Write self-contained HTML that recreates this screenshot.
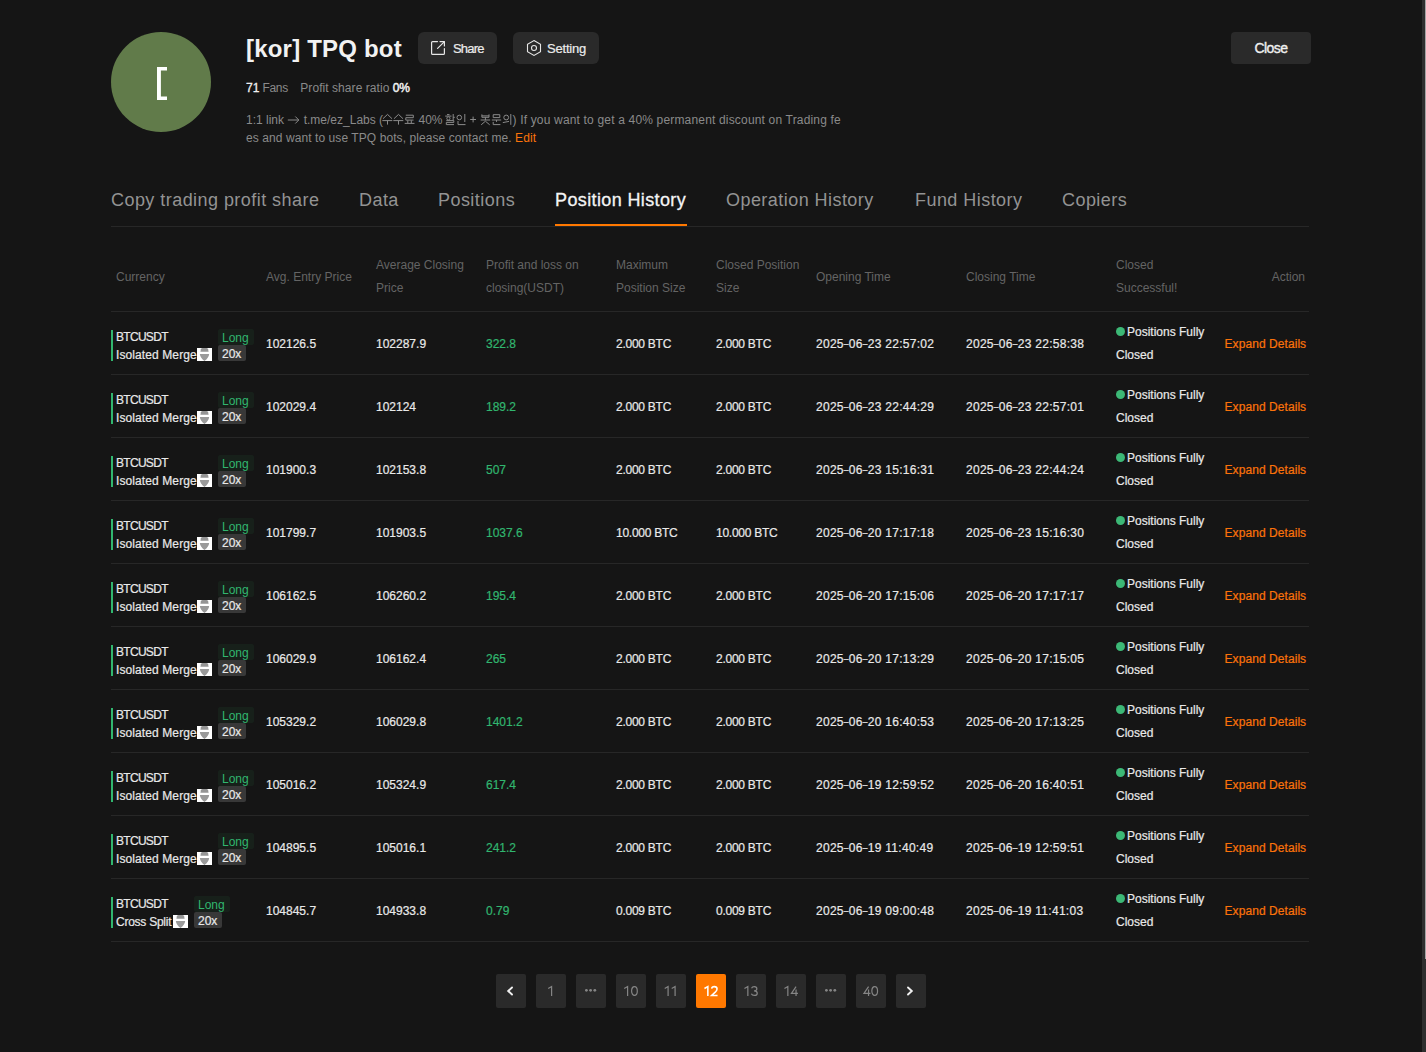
<!DOCTYPE html>
<html><head><meta charset="utf-8"><title>Position History</title><style>
*{margin:0;padding:0;box-sizing:border-box}
html,body{width:1426px;height:1052px;overflow:hidden;background:#151515}
body{position:relative;font-family:"Liberation Sans",sans-serif;color:#e9e9e9;font-size:12px}
.a{position:absolute;white-space:nowrap}
.t12{font-size:12px;line-height:14px}
.m{-webkit-text-stroke:0.2px currentColor}
.hdr{color:#646464}
.line{position:absolute;height:1px;background:#272727;left:111px;width:1198px}
.btn{position:absolute;background:#2a2a2a;border-radius:6px;height:32px;top:32px}
.tab{position:absolute;top:189px;font-size:18px;line-height:22px;color:#939393;letter-spacing:0.45px;white-space:nowrap}
.pg{position:absolute;top:974px;width:30px;height:34px;background:#2a2a2a;border-radius:2px;color:#7d7d7d;font-size:14px;line-height:34px;text-align:center}
.bar{position:absolute;left:111px;width:2px;height:31px;background:#31b66f}
.long{position:absolute;width:36px;height:16px;background:#17201a;border-radius:2px;color:#31b66f;font-size:12px;line-height:18px;padding-left:4px}
.lev{position:absolute;width:28px;height:16px;background:#383838;border-radius:2px;color:#e9e9e9;font-size:12px;line-height:18px;padding-left:4px;-webkit-text-stroke:0.2px currentColor}
.ico{position:absolute;width:15px;height:13px;background:#fff}
.dot{position:absolute;width:9px;height:9px;border-radius:50%;background:#3cb876}
.exp{color:#fb730a}
</style></head><body>
<div class="a" style="left:1422px;top:0;width:4px;height:1052px;background:#2e2e2e"></div>
<div class="a" style="left:1425px;top:0;width:1px;height:959px;background:#a4a4a4"></div>
<div class="a" style="left:111px;top:32px;width:100px;height:100px;border-radius:50%;background:#617b4a"></div>
<svg class="a" style="left:157px;top:67px" width="10" height="34"><path d="M0 0 H10 V3.4 H3.9 V29.6 H10 V33 H0 Z" fill="#fff"/></svg>
<div class="a" style="left:246px;top:35px;font-size:24px;line-height:28px;font-weight:700;color:#f2f2f2;letter-spacing:0.2px">[kor] TPQ bot</div>
<div class="btn" style="left:418px;width:79px"></div>
<svg class="a" style="left:430px;top:40px" width="16" height="16" viewBox="0 0 16 16" fill="none" stroke="#e6e6e6" stroke-width="1.2" stroke-linecap="round" stroke-linejoin="round"><path d="M7.5 1.6 H2.6 Q1.6 1.6 1.6 2.6 V13.4 Q1.6 14.4 2.6 14.4 H13.4 Q14.4 14.4 14.4 13.4 V8.5"/><path d="M10 1.6 H14.4 V6"/><path d="M14.2 1.8 L7.6 8.4"/></svg>
<div class="a m" style="left:453px;top:41px;font-size:13px;line-height:15px;color:#ececec;letter-spacing:-0.8px">Share</div>
<div class="btn" style="left:513px;width:86px"></div>
<svg class="a" style="left:526px;top:40px" width="16" height="16" viewBox="0 0 16 16" fill="none" stroke="#e6e6e6" stroke-width="1.1"><path d="M8 0.6 L14.5 4.3 V11.7 L8 15.4 L1.5 11.7 V4.3 Z"/><circle cx="8" cy="8" r="2.5"/></svg>
<div class="a m" style="left:547px;top:41px;font-size:13px;line-height:15px;color:#ececec;letter-spacing:-0.2px">Setting</div>
<div class="btn" style="left:1231px;width:80px;border-radius:4px"></div>
<div class="a" style="left:1231px;width:80px;text-align:center;top:40px;font-size:14px;line-height:16px;-webkit-text-stroke:0.35px #f0f0f0;color:#f0f0f0;letter-spacing:-0.6px">Close</div>
<div class="a t12" style="left:246px;top:81px;color:#8a8a8a"><span style="color:#f0f0f0;-webkit-text-stroke:0.3px #f0f0f0">71</span><span style="letter-spacing:-0.3px"> Fans</span></div>
<div class="a t12" style="left:300.3px;top:81px;color:#8a8a8a;letter-spacing:0.06px">Profit share ratio <span style="color:#f4f4f4;-webkit-text-stroke:0.45px #f4f4f4;letter-spacing:-0.2px">0%</span></div>
<div class="a" style="left:246px;top:111px;font-size:12px;line-height:18px;color:#8a8a8a">1:1 link <svg width="13" height="10" viewBox="0 0 13 10" style="vertical-align:-0.5px" fill="none" stroke="#8a8a8a" stroke-width="1"><path d="M0.8 5 H11.8 M8.3 1.5 L11.8 5 L8.3 8.5"/></svg> t.me/ez_Labs (</div>
<div class="a" style="left:418.5px;top:111px;font-size:12px;line-height:18px;color:#8a8a8a">40%</div>
<svg class="a" style="left:380px;top:112px" width="136" height="16" viewBox="0 0 136 16" fill="none" stroke="#8a8a8a" stroke-width="1"><path d="M3 6.7 L7.5 2.4 L12 6.7 M2.3 8.6 H12.3 M7.5 8.6 V12.6 M14 6.7 L18.5 2.4 L23 6.7 M13.3 8.6 H23.3 M18.5 8.6 V12.6 M25.8 3.2 H33.3 V5.7 H25.8 V8.1 H33.5 M27.8 8.3 V11.2 M31.3 8.3 V11.2 M24.7 11.4 H34.5 M67 2.6 H69.5 M65.2 4.1 H71.5 M73.2 2 V8.3 M73.2 5.3 H74.8 M66.3 8.6 H73.8 V10.4 H66.3 V12.6 H74 M84.8 2 V10 M78 9 V12.6 H85.5 M90.2 7.5 H96 M93.1 4.6 V10.4 M101.9 2.4 V5.3 H109 V2.4 M101.9 3.9 H109 M100.6 8 H110.2 M105.4 5.3 V8 M101.2 12.8 L105.4 9.2 L109.7 12.8 M113.2 2.7 H119.8 V5.6 H113.2 Z M111.8 8 H121.2 M116.5 8 V9.9 M113.2 9.9 V12.6 H120.4 M122.8 10.6 L129 9.4 M130.8 2 V12.8"/><circle cx="68.4" cy="6.4" r="1.6"/><circle cx="79.3" cy="5.5" r="2.3"/><circle cx="126.2" cy="5.5" r="2.4"/></svg>
<div class="a" style="left:512.5px;top:111px;font-size:12px;line-height:18px;color:#8a8a8a;letter-spacing:0.173px">) If you want to get a 40% permanent discount on Trading fe</div>
<div class="a" style="left:246px;top:129px;font-size:12px;line-height:18px;color:#8a8a8a;letter-spacing:0.08px">es and want to use TPQ bots, please contact me. <span style="color:#fb730a">Edit</span></div>
<div class="tab" style="left:111px">Copy trading profit share</div>
<div class="tab" style="left:359px">Data</div>
<div class="tab" style="left:438px">Positions</div>
<div class="tab" style="left:555px;color:#f4f4f4;letter-spacing:0.38px;-webkit-text-stroke:0.3px #f4f4f4">Position History</div>
<div class="tab" style="left:726px">Operation History</div>
<div class="tab" style="left:915px">Fund History</div>
<div class="tab" style="left:1062px">Copiers</div>
<div class="line" style="top:226px"></div>
<div class="a" style="left:555px;top:224px;width:132px;height:2px;background:#ff7800"></div>
<div class="a t12 hdr" style="left:116px;top:270px">Currency</div>
<div class="a t12 hdr" style="left:266px;top:270px">Avg. Entry Price</div>
<div class="a hdr" style="left:376px;top:254px;font-size:12px;line-height:23px">Average Closing<br>Price</div>
<div class="a hdr" style="left:486px;top:254px;font-size:12px;line-height:23px">Profit and loss on<br>closing(USDT)</div>
<div class="a hdr" style="left:616px;top:254px;font-size:12px;line-height:23px">Maximum<br>Position Size</div>
<div class="a hdr" style="left:716px;top:254px;font-size:12px;line-height:23px">Closed Position<br>Size</div>
<div class="a t12 hdr" style="left:816px;top:270px">Opening Time</div>
<div class="a t12 hdr" style="left:966px;top:270px">Closing Time</div>
<div class="a hdr" style="left:1116px;top:254px;font-size:12px;line-height:23px">Closed<br>Successful!</div>
<div class="a t12 hdr" style="left:1205px;width:100px;text-align:right;top:270px">Action</div>
<div class="line" style="top:311px"></div>
<div class="line" style="top:374px"></div>
<div class="bar" style="top:330px"></div>
<div class="a t12 m" style="left:116px;top:330px;letter-spacing:-0.7px">BTCUSDT</div>
<div class="a t12 m" style="left:116px;top:348px;letter-spacing:0.1px">Isolated Merge</div>
<svg class="ico" style="left:197px;top:348px" width="15" height="13" viewBox="0 0 15 13"><rect width="15" height="13" fill="#fff"/><path d="M3.4 3.8 L3.9 1.2 Q4.2 0 5.6 0 H9.4 Q10.8 0 11.1 1.2 L11.6 3.8 Z" fill="#959595"/><path d="M2.8 6 H12.2 Q11.6 10 7.5 13 Q3.4 10 2.8 6 Z" fill="#9a9a9a"/></svg>
<div class="long" style="left:218px;top:329px">Long</div>
<div class="lev" style="left:218px;top:345px">20x</div>
<div class="a t12 m" style="left:266px;top:337px">102126.5</div>
<div class="a t12 m" style="left:376px;top:337px">102287.9</div>
<div class="a t12 m" style="left:486px;top:337px;color:#31b66f">322.8</div>
<div class="a t12 m" style="left:616px;top:337px;letter-spacing:-0.25px">2.000 BTC</div>
<div class="a t12 m" style="left:716px;top:337px;letter-spacing:-0.25px">2.000 BTC</div>
<div class="a t12 m" style="left:816px;top:337px;letter-spacing:0.28px">2025<span style="font-size:8.5px;vertical-align:1px">–</span>06<span style="font-size:8.5px;vertical-align:1px">–</span>23 22:57:02</div>
<div class="a t12 m" style="left:966px;top:337px;letter-spacing:0.28px">2025<span style="font-size:8.5px;vertical-align:1px">–</span>06<span style="font-size:8.5px;vertical-align:1px">–</span>23 22:58:38</div>
<div class="dot" style="left:1116px;top:327px"></div>
<div class="a t12 m" style="left:1127px;top:325px">Positions Fully</div>
<div class="a t12 m" style="left:1116px;top:348px">Closed</div>
<div class="a t12 m exp" style="left:1224.5px;top:337px;letter-spacing:0.07px">Expand Details</div>
<div class="line" style="top:437px"></div>
<div class="bar" style="top:393px"></div>
<div class="a t12 m" style="left:116px;top:393px;letter-spacing:-0.7px">BTCUSDT</div>
<div class="a t12 m" style="left:116px;top:411px;letter-spacing:0.1px">Isolated Merge</div>
<svg class="ico" style="left:197px;top:411px" width="15" height="13" viewBox="0 0 15 13"><rect width="15" height="13" fill="#fff"/><path d="M3.4 3.8 L3.9 1.2 Q4.2 0 5.6 0 H9.4 Q10.8 0 11.1 1.2 L11.6 3.8 Z" fill="#959595"/><path d="M2.8 6 H12.2 Q11.6 10 7.5 13 Q3.4 10 2.8 6 Z" fill="#9a9a9a"/></svg>
<div class="long" style="left:218px;top:392px">Long</div>
<div class="lev" style="left:218px;top:408px">20x</div>
<div class="a t12 m" style="left:266px;top:400px">102029.4</div>
<div class="a t12 m" style="left:376px;top:400px">102124</div>
<div class="a t12 m" style="left:486px;top:400px;color:#31b66f">189.2</div>
<div class="a t12 m" style="left:616px;top:400px;letter-spacing:-0.25px">2.000 BTC</div>
<div class="a t12 m" style="left:716px;top:400px;letter-spacing:-0.25px">2.000 BTC</div>
<div class="a t12 m" style="left:816px;top:400px;letter-spacing:0.28px">2025<span style="font-size:8.5px;vertical-align:1px">–</span>06<span style="font-size:8.5px;vertical-align:1px">–</span>23 22:44:29</div>
<div class="a t12 m" style="left:966px;top:400px;letter-spacing:0.28px">2025<span style="font-size:8.5px;vertical-align:1px">–</span>06<span style="font-size:8.5px;vertical-align:1px">–</span>23 22:57:01</div>
<div class="dot" style="left:1116px;top:390px"></div>
<div class="a t12 m" style="left:1127px;top:388px">Positions Fully</div>
<div class="a t12 m" style="left:1116px;top:411px">Closed</div>
<div class="a t12 m exp" style="left:1224.5px;top:400px;letter-spacing:0.07px">Expand Details</div>
<div class="line" style="top:500px"></div>
<div class="bar" style="top:456px"></div>
<div class="a t12 m" style="left:116px;top:456px;letter-spacing:-0.7px">BTCUSDT</div>
<div class="a t12 m" style="left:116px;top:474px;letter-spacing:0.1px">Isolated Merge</div>
<svg class="ico" style="left:197px;top:474px" width="15" height="13" viewBox="0 0 15 13"><rect width="15" height="13" fill="#fff"/><path d="M3.4 3.8 L3.9 1.2 Q4.2 0 5.6 0 H9.4 Q10.8 0 11.1 1.2 L11.6 3.8 Z" fill="#959595"/><path d="M2.8 6 H12.2 Q11.6 10 7.5 13 Q3.4 10 2.8 6 Z" fill="#9a9a9a"/></svg>
<div class="long" style="left:218px;top:455px">Long</div>
<div class="lev" style="left:218px;top:471px">20x</div>
<div class="a t12 m" style="left:266px;top:463px">101900.3</div>
<div class="a t12 m" style="left:376px;top:463px">102153.8</div>
<div class="a t12 m" style="left:486px;top:463px;color:#31b66f">507</div>
<div class="a t12 m" style="left:616px;top:463px;letter-spacing:-0.25px">2.000 BTC</div>
<div class="a t12 m" style="left:716px;top:463px;letter-spacing:-0.25px">2.000 BTC</div>
<div class="a t12 m" style="left:816px;top:463px;letter-spacing:0.28px">2025<span style="font-size:8.5px;vertical-align:1px">–</span>06<span style="font-size:8.5px;vertical-align:1px">–</span>23 15:16:31</div>
<div class="a t12 m" style="left:966px;top:463px;letter-spacing:0.28px">2025<span style="font-size:8.5px;vertical-align:1px">–</span>06<span style="font-size:8.5px;vertical-align:1px">–</span>23 22:44:24</div>
<div class="dot" style="left:1116px;top:453px"></div>
<div class="a t12 m" style="left:1127px;top:451px">Positions Fully</div>
<div class="a t12 m" style="left:1116px;top:474px">Closed</div>
<div class="a t12 m exp" style="left:1224.5px;top:463px;letter-spacing:0.07px">Expand Details</div>
<div class="line" style="top:563px"></div>
<div class="bar" style="top:519px"></div>
<div class="a t12 m" style="left:116px;top:519px;letter-spacing:-0.7px">BTCUSDT</div>
<div class="a t12 m" style="left:116px;top:537px;letter-spacing:0.1px">Isolated Merge</div>
<svg class="ico" style="left:197px;top:537px" width="15" height="13" viewBox="0 0 15 13"><rect width="15" height="13" fill="#fff"/><path d="M3.4 3.8 L3.9 1.2 Q4.2 0 5.6 0 H9.4 Q10.8 0 11.1 1.2 L11.6 3.8 Z" fill="#959595"/><path d="M2.8 6 H12.2 Q11.6 10 7.5 13 Q3.4 10 2.8 6 Z" fill="#9a9a9a"/></svg>
<div class="long" style="left:218px;top:518px">Long</div>
<div class="lev" style="left:218px;top:534px">20x</div>
<div class="a t12 m" style="left:266px;top:526px">101799.7</div>
<div class="a t12 m" style="left:376px;top:526px">101903.5</div>
<div class="a t12 m" style="left:486px;top:526px;color:#31b66f">1037.6</div>
<div class="a t12 m" style="left:616px;top:526px;letter-spacing:-0.25px">10.000 BTC</div>
<div class="a t12 m" style="left:716px;top:526px;letter-spacing:-0.25px">10.000 BTC</div>
<div class="a t12 m" style="left:816px;top:526px;letter-spacing:0.28px">2025<span style="font-size:8.5px;vertical-align:1px">–</span>06<span style="font-size:8.5px;vertical-align:1px">–</span>20 17:17:18</div>
<div class="a t12 m" style="left:966px;top:526px;letter-spacing:0.28px">2025<span style="font-size:8.5px;vertical-align:1px">–</span>06<span style="font-size:8.5px;vertical-align:1px">–</span>23 15:16:30</div>
<div class="dot" style="left:1116px;top:516px"></div>
<div class="a t12 m" style="left:1127px;top:514px">Positions Fully</div>
<div class="a t12 m" style="left:1116px;top:537px">Closed</div>
<div class="a t12 m exp" style="left:1224.5px;top:526px;letter-spacing:0.07px">Expand Details</div>
<div class="line" style="top:626px"></div>
<div class="bar" style="top:582px"></div>
<div class="a t12 m" style="left:116px;top:582px;letter-spacing:-0.7px">BTCUSDT</div>
<div class="a t12 m" style="left:116px;top:600px;letter-spacing:0.1px">Isolated Merge</div>
<svg class="ico" style="left:197px;top:600px" width="15" height="13" viewBox="0 0 15 13"><rect width="15" height="13" fill="#fff"/><path d="M3.4 3.8 L3.9 1.2 Q4.2 0 5.6 0 H9.4 Q10.8 0 11.1 1.2 L11.6 3.8 Z" fill="#959595"/><path d="M2.8 6 H12.2 Q11.6 10 7.5 13 Q3.4 10 2.8 6 Z" fill="#9a9a9a"/></svg>
<div class="long" style="left:218px;top:581px">Long</div>
<div class="lev" style="left:218px;top:597px">20x</div>
<div class="a t12 m" style="left:266px;top:589px">106162.5</div>
<div class="a t12 m" style="left:376px;top:589px">106260.2</div>
<div class="a t12 m" style="left:486px;top:589px;color:#31b66f">195.4</div>
<div class="a t12 m" style="left:616px;top:589px;letter-spacing:-0.25px">2.000 BTC</div>
<div class="a t12 m" style="left:716px;top:589px;letter-spacing:-0.25px">2.000 BTC</div>
<div class="a t12 m" style="left:816px;top:589px;letter-spacing:0.28px">2025<span style="font-size:8.5px;vertical-align:1px">–</span>06<span style="font-size:8.5px;vertical-align:1px">–</span>20 17:15:06</div>
<div class="a t12 m" style="left:966px;top:589px;letter-spacing:0.28px">2025<span style="font-size:8.5px;vertical-align:1px">–</span>06<span style="font-size:8.5px;vertical-align:1px">–</span>20 17:17:17</div>
<div class="dot" style="left:1116px;top:579px"></div>
<div class="a t12 m" style="left:1127px;top:577px">Positions Fully</div>
<div class="a t12 m" style="left:1116px;top:600px">Closed</div>
<div class="a t12 m exp" style="left:1224.5px;top:589px;letter-spacing:0.07px">Expand Details</div>
<div class="line" style="top:689px"></div>
<div class="bar" style="top:645px"></div>
<div class="a t12 m" style="left:116px;top:645px;letter-spacing:-0.7px">BTCUSDT</div>
<div class="a t12 m" style="left:116px;top:663px;letter-spacing:0.1px">Isolated Merge</div>
<svg class="ico" style="left:197px;top:663px" width="15" height="13" viewBox="0 0 15 13"><rect width="15" height="13" fill="#fff"/><path d="M3.4 3.8 L3.9 1.2 Q4.2 0 5.6 0 H9.4 Q10.8 0 11.1 1.2 L11.6 3.8 Z" fill="#959595"/><path d="M2.8 6 H12.2 Q11.6 10 7.5 13 Q3.4 10 2.8 6 Z" fill="#9a9a9a"/></svg>
<div class="long" style="left:218px;top:644px">Long</div>
<div class="lev" style="left:218px;top:660px">20x</div>
<div class="a t12 m" style="left:266px;top:652px">106029.9</div>
<div class="a t12 m" style="left:376px;top:652px">106162.4</div>
<div class="a t12 m" style="left:486px;top:652px;color:#31b66f">265</div>
<div class="a t12 m" style="left:616px;top:652px;letter-spacing:-0.25px">2.000 BTC</div>
<div class="a t12 m" style="left:716px;top:652px;letter-spacing:-0.25px">2.000 BTC</div>
<div class="a t12 m" style="left:816px;top:652px;letter-spacing:0.28px">2025<span style="font-size:8.5px;vertical-align:1px">–</span>06<span style="font-size:8.5px;vertical-align:1px">–</span>20 17:13:29</div>
<div class="a t12 m" style="left:966px;top:652px;letter-spacing:0.28px">2025<span style="font-size:8.5px;vertical-align:1px">–</span>06<span style="font-size:8.5px;vertical-align:1px">–</span>20 17:15:05</div>
<div class="dot" style="left:1116px;top:642px"></div>
<div class="a t12 m" style="left:1127px;top:640px">Positions Fully</div>
<div class="a t12 m" style="left:1116px;top:663px">Closed</div>
<div class="a t12 m exp" style="left:1224.5px;top:652px;letter-spacing:0.07px">Expand Details</div>
<div class="line" style="top:752px"></div>
<div class="bar" style="top:708px"></div>
<div class="a t12 m" style="left:116px;top:708px;letter-spacing:-0.7px">BTCUSDT</div>
<div class="a t12 m" style="left:116px;top:726px;letter-spacing:0.1px">Isolated Merge</div>
<svg class="ico" style="left:197px;top:726px" width="15" height="13" viewBox="0 0 15 13"><rect width="15" height="13" fill="#fff"/><path d="M3.4 3.8 L3.9 1.2 Q4.2 0 5.6 0 H9.4 Q10.8 0 11.1 1.2 L11.6 3.8 Z" fill="#959595"/><path d="M2.8 6 H12.2 Q11.6 10 7.5 13 Q3.4 10 2.8 6 Z" fill="#9a9a9a"/></svg>
<div class="long" style="left:218px;top:707px">Long</div>
<div class="lev" style="left:218px;top:723px">20x</div>
<div class="a t12 m" style="left:266px;top:715px">105329.2</div>
<div class="a t12 m" style="left:376px;top:715px">106029.8</div>
<div class="a t12 m" style="left:486px;top:715px;color:#31b66f">1401.2</div>
<div class="a t12 m" style="left:616px;top:715px;letter-spacing:-0.25px">2.000 BTC</div>
<div class="a t12 m" style="left:716px;top:715px;letter-spacing:-0.25px">2.000 BTC</div>
<div class="a t12 m" style="left:816px;top:715px;letter-spacing:0.28px">2025<span style="font-size:8.5px;vertical-align:1px">–</span>06<span style="font-size:8.5px;vertical-align:1px">–</span>20 16:40:53</div>
<div class="a t12 m" style="left:966px;top:715px;letter-spacing:0.28px">2025<span style="font-size:8.5px;vertical-align:1px">–</span>06<span style="font-size:8.5px;vertical-align:1px">–</span>20 17:13:25</div>
<div class="dot" style="left:1116px;top:705px"></div>
<div class="a t12 m" style="left:1127px;top:703px">Positions Fully</div>
<div class="a t12 m" style="left:1116px;top:726px">Closed</div>
<div class="a t12 m exp" style="left:1224.5px;top:715px;letter-spacing:0.07px">Expand Details</div>
<div class="line" style="top:815px"></div>
<div class="bar" style="top:771px"></div>
<div class="a t12 m" style="left:116px;top:771px;letter-spacing:-0.7px">BTCUSDT</div>
<div class="a t12 m" style="left:116px;top:789px;letter-spacing:0.1px">Isolated Merge</div>
<svg class="ico" style="left:197px;top:789px" width="15" height="13" viewBox="0 0 15 13"><rect width="15" height="13" fill="#fff"/><path d="M3.4 3.8 L3.9 1.2 Q4.2 0 5.6 0 H9.4 Q10.8 0 11.1 1.2 L11.6 3.8 Z" fill="#959595"/><path d="M2.8 6 H12.2 Q11.6 10 7.5 13 Q3.4 10 2.8 6 Z" fill="#9a9a9a"/></svg>
<div class="long" style="left:218px;top:770px">Long</div>
<div class="lev" style="left:218px;top:786px">20x</div>
<div class="a t12 m" style="left:266px;top:778px">105016.2</div>
<div class="a t12 m" style="left:376px;top:778px">105324.9</div>
<div class="a t12 m" style="left:486px;top:778px;color:#31b66f">617.4</div>
<div class="a t12 m" style="left:616px;top:778px;letter-spacing:-0.25px">2.000 BTC</div>
<div class="a t12 m" style="left:716px;top:778px;letter-spacing:-0.25px">2.000 BTC</div>
<div class="a t12 m" style="left:816px;top:778px;letter-spacing:0.28px">2025<span style="font-size:8.5px;vertical-align:1px">–</span>06<span style="font-size:8.5px;vertical-align:1px">–</span>19 12:59:52</div>
<div class="a t12 m" style="left:966px;top:778px;letter-spacing:0.28px">2025<span style="font-size:8.5px;vertical-align:1px">–</span>06<span style="font-size:8.5px;vertical-align:1px">–</span>20 16:40:51</div>
<div class="dot" style="left:1116px;top:768px"></div>
<div class="a t12 m" style="left:1127px;top:766px">Positions Fully</div>
<div class="a t12 m" style="left:1116px;top:789px">Closed</div>
<div class="a t12 m exp" style="left:1224.5px;top:778px;letter-spacing:0.07px">Expand Details</div>
<div class="line" style="top:878px"></div>
<div class="bar" style="top:834px"></div>
<div class="a t12 m" style="left:116px;top:834px;letter-spacing:-0.7px">BTCUSDT</div>
<div class="a t12 m" style="left:116px;top:852px;letter-spacing:0.1px">Isolated Merge</div>
<svg class="ico" style="left:197px;top:852px" width="15" height="13" viewBox="0 0 15 13"><rect width="15" height="13" fill="#fff"/><path d="M3.4 3.8 L3.9 1.2 Q4.2 0 5.6 0 H9.4 Q10.8 0 11.1 1.2 L11.6 3.8 Z" fill="#959595"/><path d="M2.8 6 H12.2 Q11.6 10 7.5 13 Q3.4 10 2.8 6 Z" fill="#9a9a9a"/></svg>
<div class="long" style="left:218px;top:833px">Long</div>
<div class="lev" style="left:218px;top:849px">20x</div>
<div class="a t12 m" style="left:266px;top:841px">104895.5</div>
<div class="a t12 m" style="left:376px;top:841px">105016.1</div>
<div class="a t12 m" style="left:486px;top:841px;color:#31b66f">241.2</div>
<div class="a t12 m" style="left:616px;top:841px;letter-spacing:-0.25px">2.000 BTC</div>
<div class="a t12 m" style="left:716px;top:841px;letter-spacing:-0.25px">2.000 BTC</div>
<div class="a t12 m" style="left:816px;top:841px;letter-spacing:0.28px">2025<span style="font-size:8.5px;vertical-align:1px">–</span>06<span style="font-size:8.5px;vertical-align:1px">–</span>19 11:40:49</div>
<div class="a t12 m" style="left:966px;top:841px;letter-spacing:0.28px">2025<span style="font-size:8.5px;vertical-align:1px">–</span>06<span style="font-size:8.5px;vertical-align:1px">–</span>19 12:59:51</div>
<div class="dot" style="left:1116px;top:831px"></div>
<div class="a t12 m" style="left:1127px;top:829px">Positions Fully</div>
<div class="a t12 m" style="left:1116px;top:852px">Closed</div>
<div class="a t12 m exp" style="left:1224.5px;top:841px;letter-spacing:0.07px">Expand Details</div>
<div class="line" style="top:941px"></div>
<div class="bar" style="top:897px"></div>
<div class="a t12 m" style="left:116px;top:897px;letter-spacing:-0.7px">BTCUSDT</div>
<div class="a t12 m" style="left:116px;top:915px;letter-spacing:-0.25px">Cross Split</div>
<svg class="ico" style="left:173px;top:915px" width="15" height="13" viewBox="0 0 15 13"><rect width="15" height="13" fill="#fff"/><path d="M3.4 3.8 L3.9 1.2 Q4.2 0 5.6 0 H9.4 Q10.8 0 11.1 1.2 L11.6 3.8 Z" fill="#959595"/><path d="M2.8 6 H12.2 Q11.6 10 7.5 13 Q3.4 10 2.8 6 Z" fill="#9a9a9a"/></svg>
<div class="long" style="left:194px;top:896px">Long</div>
<div class="lev" style="left:194px;top:912px">20x</div>
<div class="a t12 m" style="left:266px;top:904px">104845.7</div>
<div class="a t12 m" style="left:376px;top:904px">104933.8</div>
<div class="a t12 m" style="left:486px;top:904px;color:#31b66f">0.79</div>
<div class="a t12 m" style="left:616px;top:904px;letter-spacing:-0.25px">0.009 BTC</div>
<div class="a t12 m" style="left:716px;top:904px;letter-spacing:-0.25px">0.009 BTC</div>
<div class="a t12 m" style="left:816px;top:904px;letter-spacing:0.28px">2025<span style="font-size:8.5px;vertical-align:1px">–</span>06<span style="font-size:8.5px;vertical-align:1px">–</span>19 09:00:48</div>
<div class="a t12 m" style="left:966px;top:904px;letter-spacing:0.28px">2025<span style="font-size:8.5px;vertical-align:1px">–</span>06<span style="font-size:8.5px;vertical-align:1px">–</span>19 11:41:03</div>
<div class="dot" style="left:1116px;top:894px"></div>
<div class="a t12 m" style="left:1127px;top:892px">Positions Fully</div>
<div class="a t12 m" style="left:1116px;top:915px">Closed</div>
<div class="a t12 m exp" style="left:1224.5px;top:904px;letter-spacing:0.07px">Expand Details</div>
<div class="pg" style="left:496px"><svg style="position:absolute;left:9px;top:11px" width="10" height="12" viewBox="0 0 10 12" fill="none" stroke="#f0f0f0" stroke-width="1.9" stroke-linecap="round" stroke-linejoin="miter"><path d="M7 2.5 L3.2 6 L7 9.5"/></svg></div>
<div class="pg" style="left:536px"><svg style="position:absolute;left:0;top:12px" width="30" height="10" viewBox="0 0 30 10" overflow="visible" fill="none" stroke="#858585" stroke-width="1.2"><g transform="translate(11.50 0)"><path d="M0.7 2.5 L4.1 0.5 V10"/></g></svg></div>
<div class="pg" style="left:576px"><svg style="position:absolute;left:8px;top:14px" width="14" height="4" viewBox="0 0 14 4" fill="#858585"><circle cx="2.4" cy="2.3" r="1.4"/><circle cx="6.6" cy="2.3" r="1.4"/><circle cx="10.8" cy="2.3" r="1.4"/></svg></div>
<div class="pg" style="left:616px"><svg style="position:absolute;left:0;top:12px" width="30" height="10" viewBox="0 0 30 10" overflow="visible" fill="none" stroke="#858585" stroke-width="1.2"><g transform="translate(7.50 0)"><path d="M0.7 2.5 L4.1 0.5 V10"/></g><g transform="translate(14.50 0)"><ellipse cx="3.95" cy="5" rx="2.85" ry="4.4"/></g></svg></div>
<div class="pg" style="left:656px"><svg style="position:absolute;left:0;top:12px" width="30" height="10" viewBox="0 0 30 10" overflow="visible" fill="none" stroke="#858585" stroke-width="1.2"><g transform="translate(8.00 0)"><path d="M0.7 2.5 L4.1 0.5 V10"/></g><g transform="translate(15.00 0)"><path d="M0.7 2.5 L4.1 0.5 V10"/></g></svg></div>
<div class="pg" style="left:696px;background:#ff7800"><svg style="position:absolute;left:0;top:12px" width="30" height="10" viewBox="0 0 30 10" overflow="visible" fill="none" stroke="#ffffff" stroke-width="1.55"><g transform="translate(7.75 0)"><path d="M0.7 2.5 L4.1 0.5 V10"/></g><g transform="translate(14.75 0)"><path d="M0.9 2.7 C1.1 1.2 2.2 0.6 3.6 0.6 C5.2 0.6 6.3 1.5 6.3 3 C6.3 4.3 5.6 5.1 4.5 6.2 L0.9 9.4 H6.8"/></g></svg></div>
<div class="pg" style="left:736px"><svg style="position:absolute;left:0;top:12px" width="30" height="10" viewBox="0 0 30 10" overflow="visible" fill="none" stroke="#858585" stroke-width="1.2"><g transform="translate(7.75 0)"><path d="M0.7 2.5 L4.1 0.5 V10"/></g><g transform="translate(14.75 0)"><path d="M0.8 2.3 C1.3 1.1 2.3 0.6 3.5 0.6 C5.1 0.6 6.1 1.5 6.1 2.8 C6.1 4.1 5.1 4.9 3.3 4.9 C5.4 4.9 6.5 5.8 6.5 7.2 C6.5 8.6 5.3 9.45 3.6 9.45 C2.2 9.45 1.1 8.9 0.6 7.7"/></g></svg></div>
<div class="pg" style="left:776px"><svg style="position:absolute;left:0;top:12px" width="30" height="10" viewBox="0 0 30 10" overflow="visible" fill="none" stroke="#858585" stroke-width="1.2"><g transform="translate(7.75 0)"><path d="M0.7 2.5 L4.1 0.5 V10"/></g><g transform="translate(14.75 0)"><path d="M5.3 0.6 L0.7 7.3 H7.2 M5.3 3.4 V10"/></g></svg></div>
<div class="pg" style="left:816px"><svg style="position:absolute;left:8px;top:14px" width="14" height="4" viewBox="0 0 14 4" fill="#858585"><circle cx="2.4" cy="2.3" r="1.4"/><circle cx="6.6" cy="2.3" r="1.4"/><circle cx="10.8" cy="2.3" r="1.4"/></svg></div>
<div class="pg" style="left:856px"><svg style="position:absolute;left:0;top:12px" width="30" height="10" viewBox="0 0 30 10" overflow="visible" fill="none" stroke="#858585" stroke-width="1.2"><g transform="translate(7.25 0)"><path d="M5.3 0.6 L0.7 7.3 H7.2 M5.3 3.4 V10"/></g><g transform="translate(14.75 0)"><ellipse cx="3.95" cy="5" rx="2.85" ry="4.4"/></g></svg></div>
<div class="pg" style="left:896px"><svg style="position:absolute;left:9px;top:11px" width="10" height="12" viewBox="0 0 10 12" fill="none" stroke="#f0f0f0" stroke-width="1.9" stroke-linecap="round" stroke-linejoin="miter"><path d="M3 2.5 L6.8 6 L3 9.5"/></svg></div>
</body></html>
